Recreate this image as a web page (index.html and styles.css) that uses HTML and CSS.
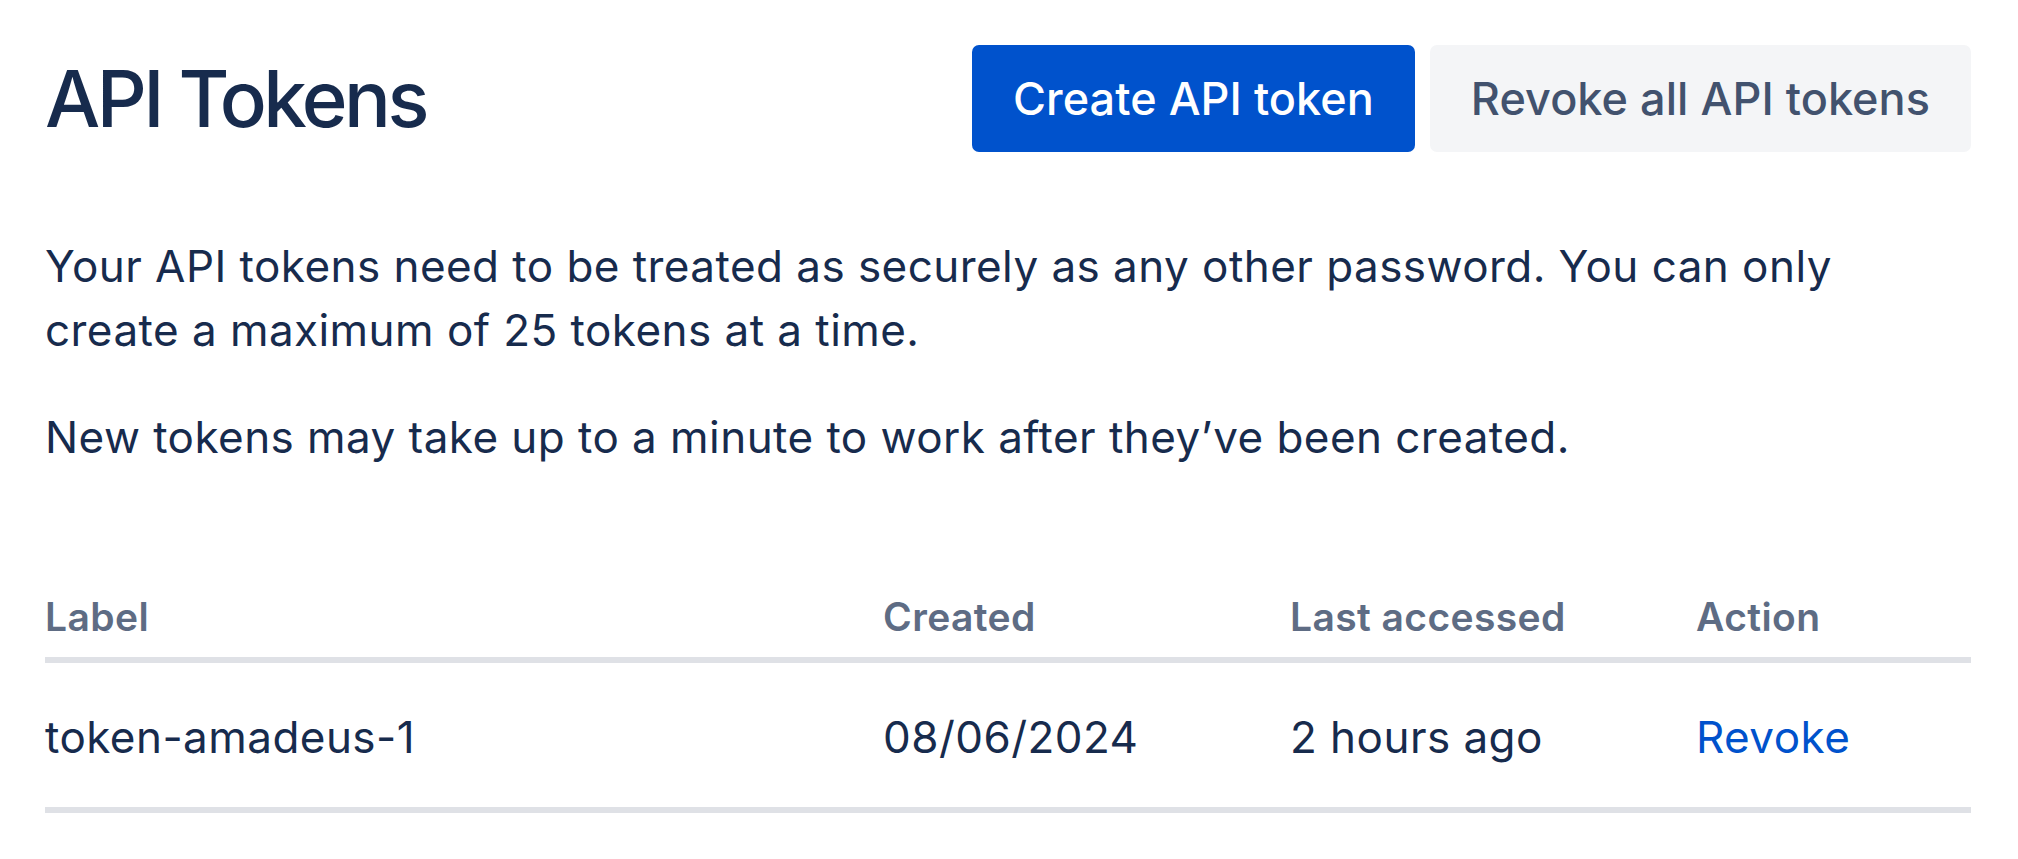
FILE: index.html
```html
<!DOCTYPE html>
<html lang="en">
<head>
<meta charset="utf-8">
<title>API Tokens</title>
<link rel="stylesheet" href="styles.css">
</head>
<body>
<main class="page">
  <header class="page-header">
    <h1 class="title">API Tokens</h1>
    <div class="actions">
      <button class="btn btn-primary" type="button">Create API token</button>
      <button class="btn btn-default" type="button">Revoke all API tokens</button>
    </div>
  </header>
  <p class="text first">Your API tokens need to be treated as securely as any other password. You can only create a maximum of 25 tokens at a time.</p>
  <p class="text second">New tokens may take up to a minute to work after they’ve been created.</p>
  <div class="table">
    <div class="row head">
      <div class="cell">Label</div>
      <div class="cell">Created</div>
      <div class="cell">Last accessed</div>
      <div class="cell">Action</div>
    </div>
    <div class="row body">
      <div class="cell">token-amadeus-1</div>
      <div class="cell">08/06/2024</div>
      <div class="cell">2 hours ago</div>
      <div class="cell"><a class="link" href="#">Revoke</a></div>
    </div>
  </div>
</main>
</body>
</html>
```
FILE: styles.css
```css
html, body {
  margin: 0;
  padding: 0;
  background: #ffffff;
}
body {
  font-family: Inter, "Noto Sans", "Liberation Sans", sans-serif;
  color: #172B4D;
}
.page {
  padding: 45px 47px 0 45px;
}
.page-header {
  display: flex;
  justify-content: space-between;
  align-items: center;
}
.title {
  margin: 0;
  font-size: 78px;
  line-height: 1;
  font-weight: 500;
  letter-spacing: -3.5px;
  color: #172B4D;
}
.actions {
  display: flex;
  gap: 15px;
}
.btn {
  height: 107px;
  padding: 0 41px;
  border: none;
  border-radius: 7px;
  font-family: inherit;
  font-size: 45px;
  font-weight: 500;
  letter-spacing: 0.05px;
  cursor: pointer;
}
.btn-primary {
  background: #0052CC;
  color: #ffffff;
}
.btn-default {
  background: #F4F5F7;
  color: #42526E;
}
.text {
  margin: 0;
  font-size: 44px;
  line-height: 64px;
  letter-spacing: 0.45px;
  max-width: 1860px;
}
.text.first {
  margin-top: 82px;
}
.text.second {
  margin-top: 43px;
}
.table {
  margin-top: 125px;
}
.row {
  display: grid;
  grid-template-columns: 838px 407px 406px 1fr;
}
.row.head {
  padding-bottom: 18px;
  border-bottom: 6px solid #DFE1E6;
  font-size: 39px;
  line-height: 45px;
  letter-spacing: 0.4px;
  font-weight: 600;
  color: #5E6C84;
}
.row.body {
  padding: 42px 0 38px;
  border-bottom: 6px solid #DFE1E6;
  font-size: 44px;
  line-height: 64px;
  letter-spacing: 0.45px;
}
.link {
  color: #0052CC;
  text-decoration: none;
}
```
